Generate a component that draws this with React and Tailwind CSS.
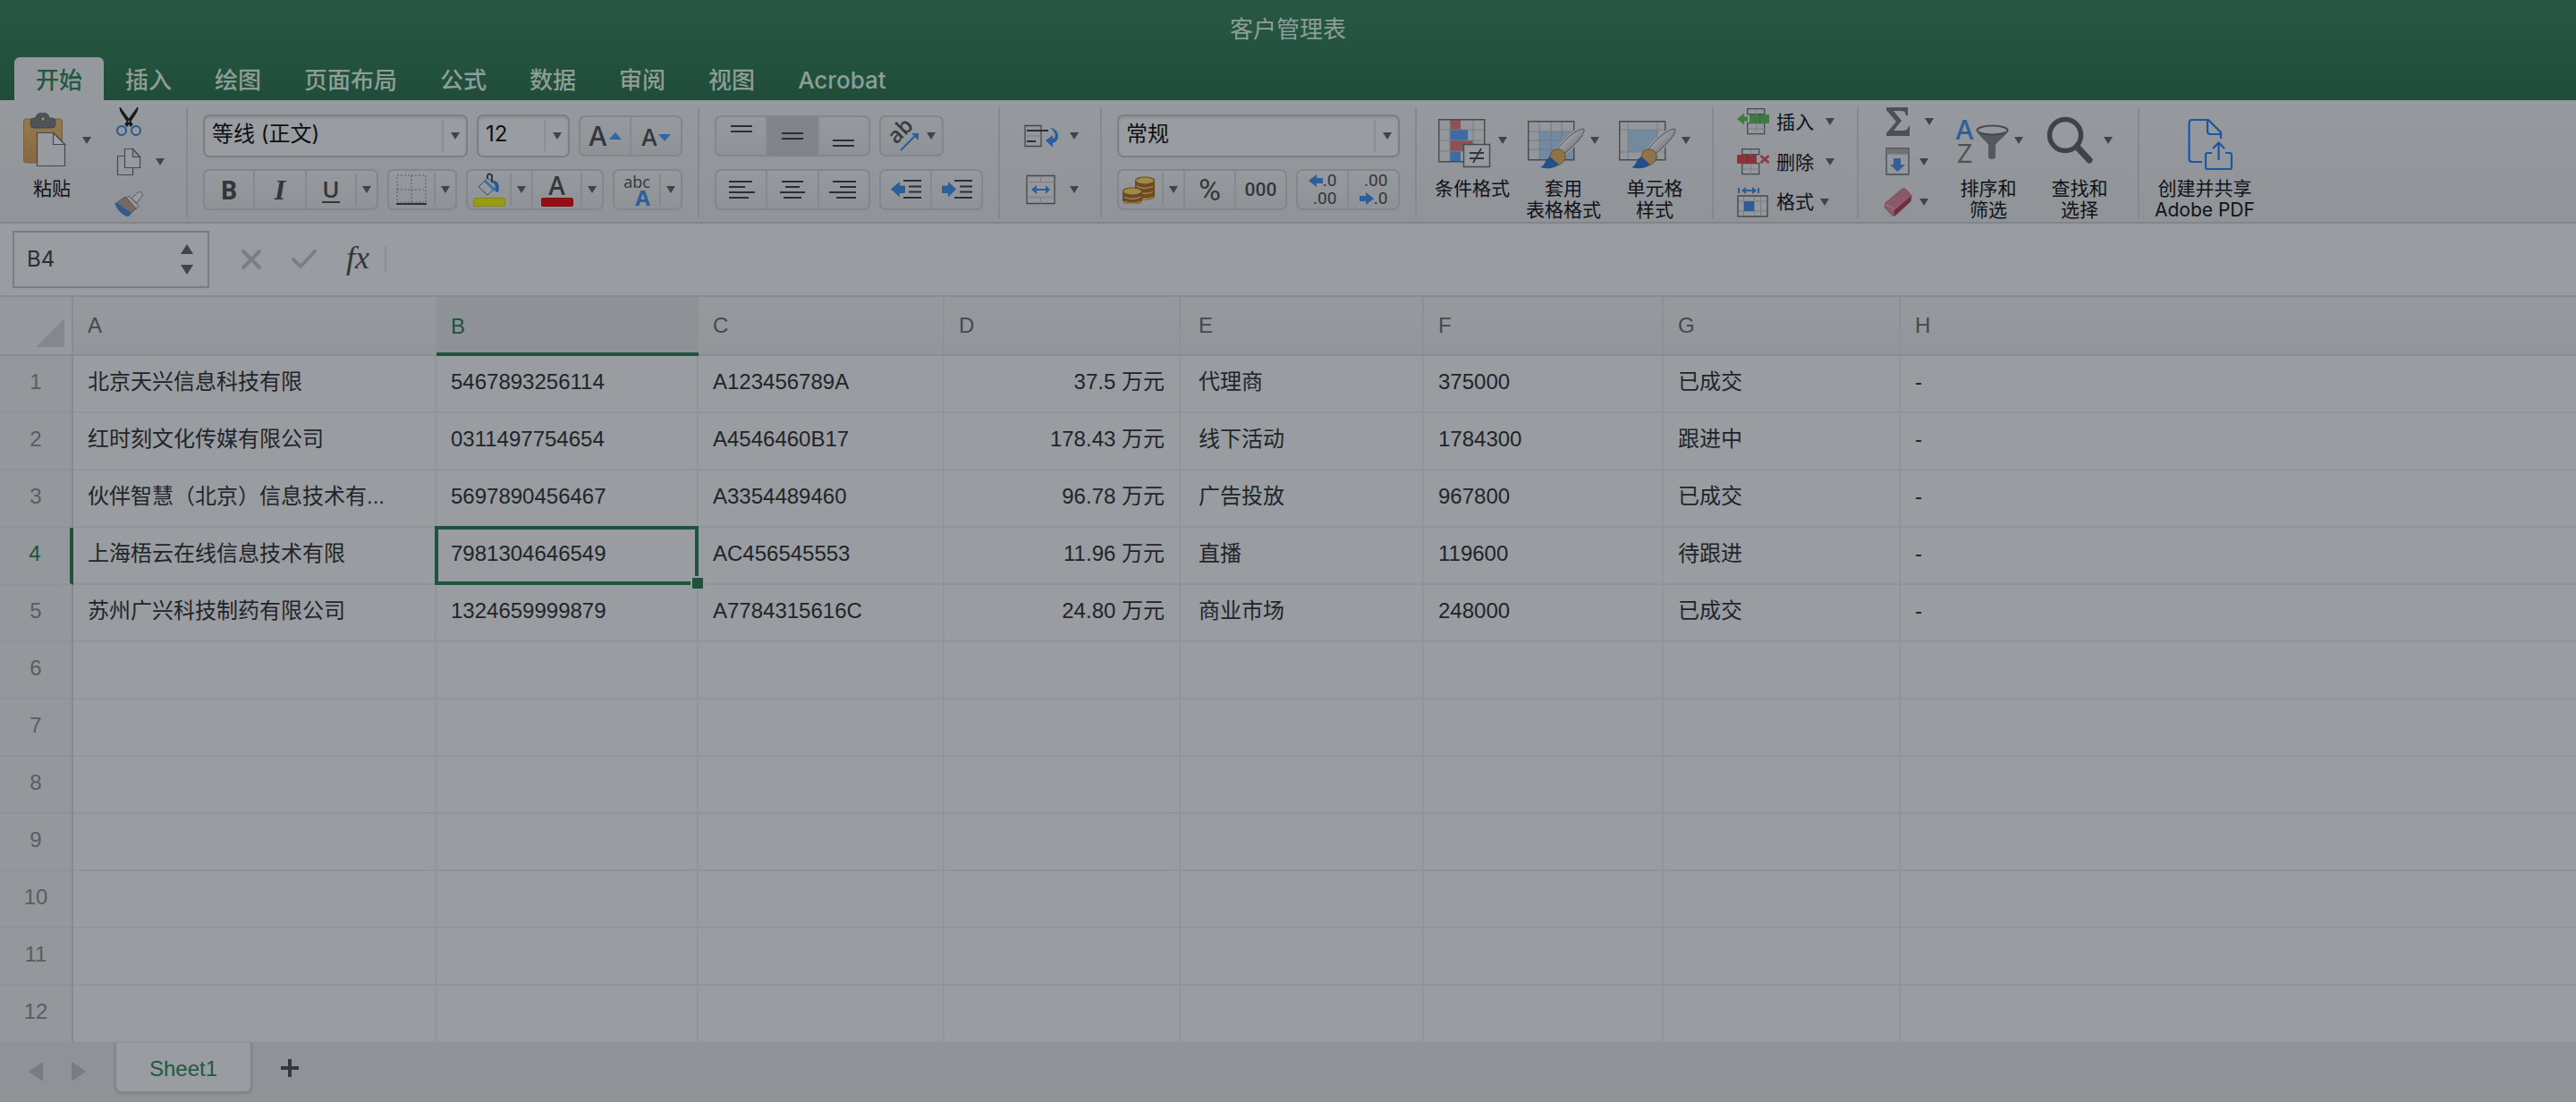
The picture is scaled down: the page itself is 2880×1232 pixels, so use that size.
import React from 'react';

const TABS = ['开始', '插入', '绘图', '页面布局', '公式', '数据', '审阅', '视图', 'Acrobat'];

const COLUMNS = ['A', 'B', 'C', 'D', 'E', 'F', 'G', 'H'];

const ROWS = [
  ['北京天兴信息科技有限', '5467893256114', 'A123456789A', '37.5 万元', '代理商', '375000', '已成交', '-'],
  ['红时刻文化传媒有限公司', '0311497754654', 'A4546460B17', '178.43 万元', '线下活动', '1784300', '跟进中', '-'],
  ['伙伴智慧（北京）信息技术有...', '5697890456467', 'A3354489460', '96.78 万元', '广告投放', '967800', '已成交', '-'],
  ['上海梧云在线信息技术有限', '7981304646549', 'AC456545553', '11.96 万元', '直播', '119600', '待跟进', '-'],
  ['苏州广兴科技制药有限公司', '1324659999879', 'A7784315616C', '24.80 万元', '商业市场', '248000', '已成交', '-'],
];

const ROW_COUNT = 12;
const ACTIVE = { row: 3, col: 1 };

function Caret({ className = '' }) {
  return (
    <svg viewBox="0 0 10 8" className={`w-[10px] h-2 shrink-0 ${className}`} aria-hidden="true">
      <path d="M0 0h10L5 8z" fill="#414549" />
    </svg>
  );
}

/* ---------- ribbon building blocks ---------- */

function Section({ className = '', children }) {
  return (
    <>
      <div className={`flex shrink-0 ${className}`}>{children}</div>
      <div className="w-[2px] h-[124px] mt-2 bg-[#85888c] shrink-0" />
    </>
  );
}

function Segments({ className = '', children }) {
  return (
    <div
      className={`flex h-[46px] rounded-[7px] border-2 border-[#83868a] bg-linear-to-b from-[#96999d] to-[#8f9296] divide-x-2 divide-[#86898d] ${className}`}
    >
      {children}
    </div>
  );
}

function Segment({ label, caret, active, className = '', children }) {
  return (
    <div className={`flex flex-1 items-stretch ${active ? 'bg-[#808387]' : ''} ${className}`}>
      <button aria-label={label} className="flex flex-1 items-center justify-center leading-none">
        {children}
      </button>
      {caret && (
        <button aria-label={`${label}选项`} className="flex w-6 items-center justify-center">
          <span className="w-[2px] h-9 bg-[#85888c]" />
          <Caret className="mx-auto" />
        </button>
      )}
    </div>
  );
}

function Combo({ label, value, className = '' }) {
  return (
    <div className={`relative h-12 ${className}`}>
      <select
        aria-label={label}
        defaultValue={value}
        className="appearance-none w-full h-full pl-2 pr-8 pb-1 rounded-[7px] border-2 border-[#7b7e82] bg-[#999ca0] text-2xl text-[#0c1015] shadow-[inset_0_2px_2px_#8b8e92]"
      >
        <option>{value}</option>
      </select>
      <div className="absolute right-[9px] top-[6px] h-9 flex items-center pointer-events-none">
        <span className="w-[2px] h-9 bg-[#8c8f93] mr-2" />
        <Caret />
      </div>
    </div>
  );
}

function BigButton({ icon, lines, caret = true, className = '', labelClass = '' }) {
  return (
    <button className={`flex flex-col items-center pt-3 ${className}`}>
      <span className="flex items-center justify-center gap-[6px] h-[66px]">
        {icon}
        {caret && <Caret />}
      </span>
      <span className={`flex flex-col mt-[9px] text-[21px] leading-6 text-[#0f1318] whitespace-nowrap ${labelClass}`}>
        {lines.map((l) => (
          <span key={l}>{l}</span>
        ))}
      </span>
    </button>
  );
}

/* ---------- icons ---------- */

function PasteIcon() {
  return (
    <svg viewBox="0 0 48 62" className="w-12 h-[62px] mr-3">
      <defs>
        <linearGradient id="board" x1="0" y1="0" x2="0" y2="1">
          <stop offset="0" stopColor="#957a4e" />
          <stop offset="1" stopColor="#866842" />
        </linearGradient>
      </defs>
      <rect x="0.5" y="7" width="43" height="49" rx="3" fill="url(#board)" stroke="#77603d" />
      <path d="M8 10q0-4 4-4h2c0-8 15-8 15 0h3q4 0 4 4v3q0 4-4 4H12q-4 0-4-4z" fill="#505357" stroke="#44474b" />
      <circle cx="22" cy="7" r="2.4" fill="#a18b63" stroke="#3c3f42" strokeWidth="1" />
      <path d="M15.5 22.500h18l13 13v24h-31z" fill="#979a9e" stroke="#45484c" strokeWidth="1.2" />
      <path d="M33.500 22.500v13h13z" fill="#9da0a4" stroke="#45484c" strokeWidth="1.2" />
    </svg>
  );
}

function ScissorsIcon() {
  return (
    <svg viewBox="0 0 28 32" className="w-7 h-8 ml-[2px]">
      <path d="M4 0c0 3 1 5 3 8l9 13 2-2zM24 0c0 3-1 5-3 8l-9 13-2-2z" fill="#191c20" stroke="#191c20" strokeWidth="1.200" />
      <circle cx="6" cy="26" r="5" fill="none" stroke="#29588f" strokeWidth="2" />
      <circle cx="22" cy="26" r="5" fill="none" stroke="#29588f" strokeWidth="2" />
    </svg>
  );
}

function CopyIcon() {
  return (
    <svg viewBox="0 0 28 32" className="w-7 h-8 ml-[2px]" stroke="#46494d" strokeWidth="1.2">
      <path d="M1.500 9.500h17v21h-17z" fill="#94979b" />
      <path d="M9.500 1.500h9l8 9v12h-17z" fill="#979a9e" />
      <path d="M18.500 1.500v9h8z" fill="#8d9094" />
    </svg>
  );
}

function FormatPainterIcon() {
  return (
    <svg viewBox="0 0 32 28" className="w-8 h-7 mt-1">
      <path d="M19 8l7-7q2-1 4 0t1 4l-6 8z" fill="#989b9f" stroke="#585b5f" />
      <path d="M13 7l3-2 11 11-3 4z" fill="#94979b" stroke="#585b5f" />
      <path d="M12 6l12 13-6 6C12 21 6 17 2 13z" fill="#746a62" stroke="#5a544f" />
      <path d="M1 13c7 1 9 6 11 7 3 1 5 2 7 4l-3 4c-6 0-13-7-16-15z" fill="#2e5a90" />
    </svg>
  );
}

function BordersIcon() {
  return (
    <svg viewBox="0 0 34 34" className="w-[34px] h-[34px]" fill="none">
      <path d="M1 1h32v30H1zM1 17h32M17 1v30" stroke="#6b6e72" strokeWidth="1.500" strokeDasharray="2 2" />
      <path d="M0 33h34" stroke="#2d3035" strokeWidth="2" />
    </svg>
  );
}

function BucketIcon() {
  return (
    <svg viewBox="0 0 26 26" className="w-[26px] h-[26px]">
      <path d="M11 6l11 9-11 10-10-9z" fill="#94979b" stroke="#46494d" />
      <path d="M9 8l12 11-3 2L7 10z" fill="#3d72ad" />
      <path d="M17 9c6 0 8 5 6 13l-3-1c0-5 0-8-3-10z" fill="#27598f" />
      <path d="M11 7V3q2-3 5 0v8" fill="none" stroke="#33363a" strokeWidth="2" />
    </svg>
  );
}

/* Stacks of short strokes; each entry is [x1, x2, y] */
const LINES = {
  top: [[5, 29, 15], [5, 29, 21]],
  middle: [[5, 29, 23], [5, 29, 29]],
  bottom: [[5, 29, 31], [5, 29, 37]],
  left: [[3, 29, 17], [3, 21, 23], [3, 32, 29], [3, 25, 35]],
  center: [[5, 29, 17], [9, 25, 23], [3, 31, 29], [7, 27, 35]],
  right: [[5, 31, 17], [13, 31, 23], [1, 31, 29], [9, 31, 35]],
};

function LinesIcon({ kind }) {
  return (
    <svg viewBox="0 0 34 52" className="w-[34px] h-[52px] -my-2 shrink-0">
      {LINES[kind].map(([a, b, y]) => (
        <path key={y} d={`M${a} ${y}H${b}`} stroke="#2b2e33" strokeWidth="2" />
      ))}
    </svg>
  );
}

function IndentIcon({ right }) {
  return (
    <svg viewBox="0 0 36 24" className="w-9 h-6">
      <path d="M15 2h20M21 8.500h14M21 14.500h14M15 21h20" stroke="#2b2e33" strokeWidth="2" />
      <path
        d={right ? 'M1 8.500q0-1 1-1h6V3l9 8.500-9 9V16H2q-1 0-1-1z' : 'M17 8.500q0-1-1-1h-5V3l-10 8.500 10 9V16h5q1 0 1-1z'}
        fill="#2c5f99"
      />
    </svg>
  );
}

function OrientationIcon() {
  return (
    <svg viewBox="0 0 36 36" className="w-9 h-9 overflow-visible">
      <text x="0" y="0" transform="translate(10 28) rotate(-45)" className="font-['Open_Sans',sans-serif] text-[24px] font-semibold" fill="#36393d">
        ab
      </text>
      <path d="M15 34l16-16" stroke="#2c5f99" strokeWidth="2" />
      <path d="M27 15h8v8z" fill="#2c5f99" />
    </svg>
  );
}

function WrapIcon() {
  return (
    <svg viewBox="0 0 40 26" className="w-10 h-[26px]">
      <path d="M1 1.500h18v23H1z" fill="#94979b" stroke="#44474b" strokeWidth="1.300" />
      <path d="M1 13h18" stroke="#7b7e82" />
      <path d="M3 7h24M3 19h10" stroke="#2b2e33" strokeWidth="2" />
      <path d="M29 4c12 1 11 16 3 17v5l-8-8 8-6v4c4-1 4-7-3-12z" fill="#2c5f99" />
    </svg>
  );
}

function MergeIcon() {
  return (
    <svg viewBox="0 0 40 34" className="w-10 h-[34px]">
      <path d="M3 1.500h31v31H3z" fill="#94979b" stroke="#44474b" strokeWidth="1.300" />
      <path d="M3 8.500h31M3 25.500h31M18.500 1.500v7M18.500 25.500v7" stroke="#7b7e82" />
      <path d="M12 17h14" stroke="#2c5f99" strokeWidth="2" />
      <path d="M14 12v10l-6-5zM24 12v10l5-5z" fill="#2c5f99" />
    </svg>
  );
}

function Coin({ x, y }) {
  return (
    <g>
      <path d={`M${x} ${y}v5c0 6 22 6 22 0v-5z`} fill="#6a4a28" />
      <path d={`M${x + 2} ${y + 6}c4 3 14 3 18 0`} stroke="#a4883f" strokeWidth="1.500" fill="none" />
      <ellipse cx={x + 11} cy={y} rx="10.500" ry="4" fill="#a08a44" stroke="#6a4a28" strokeWidth="1.200" />
    </g>
  );
}

function CoinsIcon() {
  return (
    <svg viewBox="0 0 38 32" className="w-[38px] h-8 mr-1">
      <Coin x={15} y={18} />
      <Coin x={15} y={12} />
      <Coin x={15} y={6} />
      <Coin x={1} y={23} />
      <Coin x={1} y={18} />
    </svg>
  );
}

function SmallArrow({ right }) {
  return (
    <svg viewBox="0 0 16 14" className="w-4 h-[14px]">
      <path d={right ? 'M0 4h7V0l9 7-9 7v-4H0z' : 'M16 4H9V0L0 7l9 7v-4h7z'} fill="#2c5f99" />
    </svg>
  );
}

function ConditionalIcon() {
  return (
    <svg viewBox="0 -4 58 56" className="w-[58px] h-14 mr-[3px] overflow-visible">
      <path d="M.7.700h51v47H.700z" fill="#94979b" />
      <path d="M13 1h12v11H13z" fill="#8f5058" />
      <path d="M13 12h20v12H13z" fill="#3f6ba3" />
      <path d="M13 24h26v12H13z" fill="#8f5058" />
      <path d="M13 36h12v12H13z" fill="#3f6ba3" />
      <path d="M13 1v47M39 1v47M1 12h51M1 24h51M1 36h51" stroke="#7b7e82" />
      <path d="M.7.700h51v47H.700z" fill="none" stroke="#46494d" strokeWidth="1.400" />
      <path d="M28.500 28.500h29v25h-29z" fill="#979a9e" stroke="#46494d" strokeWidth="1.400" />
      <path d="M35 38h16M35 44h16M48 33l-9 16" stroke="#33363a" strokeWidth="1.800" />
    </svg>
  );
}

function BrushGridIcon({ single }) {
  return (
    <svg viewBox="0 -4 64 56" className="w-16 h-14 overflow-visible">
      <defs>
        <linearGradient id="handle" x1="0" y1="0" x2="1" y2="1">
          <stop offset="0.300" stopColor="#a4a7ab" />
          <stop offset="0.800" stopColor="#6c6f73" />
        </linearGradient>
      </defs>
      <path d="M.7 2.700h51v43H.700z" fill="#94979b" />
      {single ? (
        <>
          <path d="M10 12h33v25H10z" fill="#738a9e" />
          <path d="M10 3v43M43 3v43M1 12h51M1 37h51" stroke="#7b7e82" />
        </>
      ) : (
        <>
          <path d="M13 14h39v32H13z" fill="#7489a0" />
          <path d="M13 3v43M26 3v43M38 3v43M1 14h51M1 24h51M1 34h51" stroke="#6f7b88" />
        </>
      )}
      <path d="M.7 2.700h51v43H.700z" fill="none" stroke="#46494d" strokeWidth="1.400" />
      <path d="M33 34C42 22 54 12 62 11c2 0 1 4-1 7-4 7-13 15-21 22z" fill="#94979b" stroke="#94979b" strokeWidth="4" />
      <path d="M33 34C42 22 54 12 62 11c2 0 1 4-1 7-4 7-13 15-21 22z" fill="url(#handle)" stroke="#4c4f53" />
      <path d="M25 44c0-7 4-11 10-10 5 1 7 4 7 8 0 5-4 8-8 10z" fill="#8f7449" stroke="#665030" />
      <path d="M25 42l10 9c-6 5-14 5-21 3 6-2 5-9 11-12z" fill="#23508a" />
    </svg>
  );
}

function CellsIcon({ kind }) {
  if (kind === 'format') {
    return (
      <svg viewBox="0 0 36 34" className="w-9 h-[34px]">
        <path d="M2 1v6M24 1v6M8 4h11" stroke="#2d5c94" strokeWidth="2" />
        <path d="M10 0v8L5 4zM17 0v8l5-4z" fill="#2d5c94" />
        <path d="M1 10h33v23H1z" fill="#94979b" />
        <path d="M7.500 10v23M19.500 10v23M26.500 10v23M1 16h33M1 27h33" stroke="#7b7e82" />
        <path d="M8 16h11v11H8z" fill="#2f5a92" />
        <path d="M1 10h33v23H1z" fill="none" stroke="#46494d" strokeWidth="1.400" />
      </svg>
    );
  }
  const insert = kind === 'insert';
  return (
    <svg viewBox="0 0 36 30" className="w-9 h-[30px]">
      <g transform={insert ? 'translate(11 0)' : 'translate(5 0)'}>
        <path d="M.7.700h19v6H.700zM.7 16.700h19v12H.700z" fill="#94979b" stroke="#46494d" strokeWidth="1.300" />
        <path d="M10.500 1v6M10.500 17v12M1 23h19" stroke="#7b7e82" />
      </g>
      {insert ? (
        <>
          <path d="M0 12l8-6.500v4h4v5H8v4z" fill="#3f7a41" />
          <rect x="14" y="7" width="22" height="10" rx="1" fill="#3f7a41" />
          <path d="M25.500 7v10" stroke="#35693a" />
        </>
      ) : (
        <>
          <rect x="0" y="7" width="22" height="10" rx="1" fill="#8b3339" />
          <path d="M11.500 7v10" stroke="#742a30" />
          <path d="M26.500 8l9 8M35.500 8l-9 8" stroke="#8f3a40" strokeWidth="3" />
        </>
      )}
    </svg>
  );
}

function SigmaIcon() {
  return (
    <svg viewBox="0 0 28 32" className="w-7 h-8 ml-[2px]">
      <path d="M1 0h24v9h-2c-1-4-2-5-6-5H9l9 11L9 26h9c5 0 7-1 8-5h1v11H1v-3l11-13L1 3z" fill="#4c4f53" />
    </svg>
  );
}

function FillDownIcon() {
  return (
    <svg viewBox="0 0 28 32" className="w-7 h-8 ml-[2px]">
      <path d="M1 1h25v29H1z" fill="#94979b" stroke="#46494d" strokeWidth="1.300" />
      <path d="M1.500 1.500h24v6h-24z" fill="#6f7276" />
      <path d="M9 12h8v7h5l-8.500 8L5 19h4z" fill="#315f96" />
    </svg>
  );
}

function EraserIcon() {
  return (
    <svg viewBox="0 0 32 32" className="w-8 h-8">
      <path d="M21 1q3-1 5 2l5 6-1 6-17 16q-2 1-4-1l-8-8 1-5z" fill="#8a5a68" stroke="#7a4354" />
      <path d="M12 25L31 9l-1 6-18 16q-1-3 0-6z" fill="#6e2c43" />
      <path d="M2 19q6 1 10 6" stroke="#a4808a" fill="none" />
    </svg>
  );
}

function SortFilterIcon() {
  return (
    <span className="flex items-center w-[61px]">
      <span className="flex flex-col items-center w-6 pt-[2px] text-[30px] leading-[26px] font-['Open_Sans',sans-serif]">
        <span className="text-[#2f609b] font-semibold">A</span>
        <span className="text-[#4d5054]">Z</span>
      </span>
      <svg viewBox="0 0 37 40" className="w-[37px] h-10 mt-1">
        <path d="M1 7c2 6 9 10 13 16v13q0 3 4 3t4-3V23C26 17 34 13 36 7z" fill="#55585c" />
        <ellipse cx="18.500" cy="6.500" rx="17" ry="5" fill="#94979b" stroke="#45484c" strokeWidth="2" />
      </svg>
    </span>
  );
}

function SearchIcon() {
  return (
    <svg viewBox="0 0 54 54" className="w-[54px] h-[54px] mr-1">
      <path d="M34 34l14 15" stroke="#3f4246" strokeWidth="7" strokeLinecap="round" />
      <circle cx="21" cy="21" r="17.500" fill="#979a9e" stroke="#3f4246" strokeWidth="5.500" />
    </svg>
  );
}

function ShareIcon() {
  return (
    <svg viewBox="0 0 50 66" className="w-[50px] h-[66px] ml-3" fill="none" stroke="#1c55a0" strokeWidth="2.200">
      <path d="M16 57H5q-3.500 0-3.500-3.500v-40Q1.500 10 5 10h18l14 14v7" />
      <path d="M22 11v12q0 3 3 3h12" />
      <path d="M27 47h-5q-2 0-2 2v14q0 2 2 2h25q2 0 2-2V49q0-2-2-2h-5" />
      <path d="M34.500 55V36M28 42l6.500-6.500L41 42" />
    </svg>
  );
}

/* ---------- page parts ---------- */

function TitleBar() {
  return (
    <header className="h-28 flex flex-col bg-linear-to-b from-[#285844] to-[#1f4d3a] text-[26px] text-[#8d9e98]">
      <h1 className="h-16 pt-[2px] flex items-center justify-center leading-none">客户管理表</h1>
      <nav className="flex h-12 pl-4">
        {TABS.map((tab, i) => (
          <button
            key={tab}
            className={`px-6 h-full leading-none pt-[3px] font-medium ${i === 0 ? 'rounded-t-md bg-[#95989c] text-[#1f5a40]' : ''}`}
          >
            {tab}
          </button>
        ))}
      </nav>
    </header>
  );
}

function SmallRow({ icon, label, text, caretClass = '' }) {
  return (
    <button aria-label={label} className="flex items-center h-[46px] text-[21px] leading-none text-[#0f1318]">
      {icon}
      {text && <span className="ml-2">{text}</span>}
      <Caret className={caretClass} />
    </button>
  );
}

function Ribbon() {
  return (
    <div className="flex h-[138px] bg-linear-to-b from-[#96999d] to-[#909397] border-b-2 border-[#828589] text-[#33363a] overflow-hidden">
      <Section className="w-52 pl-[26px]">
        <BigButton icon={<PasteIcon />} lines={['粘贴']} labelClass="pr-3" />
        <div className="flex flex-col ml-[26px] pt-[2px]">
          <SmallRow label="剪切" icon={<ScissorsIcon />} caretClass="hidden" />
          <SmallRow label="复制" icon={<CopyIcon />} caretClass="ml-4" />
          <SmallRow label="格式刷" icon={<FormatPainterIcon />} caretClass="hidden" />
        </div>
      </Section>

      <Section className="flex-col gap-[13px] pt-4 px-[17px]">
        <div className="flex items-center gap-[10px]">
          <Combo label="字体" value="等线 (正文)" className="w-[296px]" />
          <Combo label="字号" value="12" className="w-26" />
          <Segments className="w-[116px]">
            <Segment label="增大字号">
              <span className="text-[30px] font-medium mr-[2px]">A</span>
              <svg viewBox="0 0 14 8" className="w-[14px] h-2"><path d="M0 8h14L7 0z" fill="#2f66a6" /></svg>
            </Segment>
            <Segment label="减小字号">
              <span className="text-[26px] font-medium pt-1 mr-px">A</span>
              <svg viewBox="0 0 14 8" className="w-[14px] h-2 mt-1"><path d="M0 0h14L7 8z" fill="#2f66a6" /></svg>
            </Segment>
          </Segments>
        </div>
        <div className="flex gap-[10px] font-['Open_Sans',sans-serif]">
          <Segments className="w-[196px]">
            <Segment label="加粗" className="max-w-[56px] text-[28px] font-bold">B</Segment>
            <Segment label="倾斜" className="max-w-[58px] text-[32px] font-semibold italic">
              <span className="font-['Liberation_Serif',serif]">I</span>
            </Segment>
            <Segment label="下划线" caret>
              <span className="text-[26px] font-semibold border-b-2 border-[#33363a] leading-7">U</span>
            </Segment>
          </Segments>
          <Segments className="w-[78px]">
            <Segment label="边框" caret><BordersIcon /></Segment>
          </Segments>
          <Segments className="w-[154px]">
            <Segment label="填充颜色" caret className="max-w-[73px]">
              <span className="flex flex-col items-center">
                <BucketIcon />
                <span className="w-9 h-[10px] mt-[2px] rounded-xs bg-[#999b14] border border-[#858712]" />
              </span>
            </Segment>
            <Segment label="字体颜色" caret>
              <span className="flex flex-col items-center text-[28px] leading-7 font-semibold">
                A
                <span className="w-9 h-[10px] rounded-xs bg-[#960f14] border border-[#800d12]" />
              </span>
            </Segment>
          </Segments>
          <Segments className="w-[78px]">
            <Segment label="拼音" caret>
              <span className="flex flex-col pt-[2px] text-[18px] leading-4 font-medium">
                abc
                <span className="self-end text-2xl leading-5 font-bold text-[#2c5f9c]">A</span>
              </span>
            </Segment>
          </Segments>
        </div>
      </Section>

      <Section className="flex-col gap-[13px] pt-[17px] px-[17px]">
        <div className="flex gap-[10px]">
          <Segments className="w-[174px]">
            <Segment label="顶端对齐"><LinesIcon kind="top" /></Segment>
            <Segment label="垂直居中" active><LinesIcon kind="middle" /></Segment>
            <Segment label="底端对齐"><LinesIcon kind="bottom" /></Segment>
          </Segments>
          <Segments className="w-18">
            <Segment label="方向">
              <OrientationIcon />
              <Caret className="ml-2" />
            </Segment>
          </Segments>
        </div>
        <div className="flex gap-[10px] pt-px">
          <Segments className="w-[174px]">
            <Segment label="左对齐"><LinesIcon kind="left" /></Segment>
            <Segment label="居中"><LinesIcon kind="center" /></Segment>
            <Segment label="右对齐"><LinesIcon kind="right" /></Segment>
          </Segments>
          <Segments className="w-[116px]">
            <Segment label="减少缩进"><IndentIcon /></Segment>
            <Segment label="增加缩进"><IndentIcon right /></Segment>
          </Segments>
        </div>
      </Section>

      <Section className="flex-col gap-[13px] pt-4 pl-[27px] pr-6">
        <button aria-label="自动换行" className="flex items-center h-12">
          <WrapIcon />
          <Caret className="ml-[11px]" />
        </button>
        <button aria-label="合并后居中" className="flex items-center h-[46px]">
          <MergeIcon />
          <Caret className="ml-[11px]" />
        </button>
      </Section>

      <Section className="flex-col gap-[13px] pt-4 px-[17px]">
        <Combo label="数字格式" value="常规" className="w-[316px]" />
        <div className="flex gap-[10px]">
          <Segments className="w-[190px]">
            <Segment label="货币" caret className="min-w-[74px]"><CoinsIcon /></Segment>
            <Segment label="百分比"><span className="font-['Roboto',sans-serif] text-[34px]">%</span></Segment>
            <Segment label="千位分隔"><span className="font-['Roboto',sans-serif] text-[21px] font-medium">000</span></Segment>
          </Segments>
          <Segments className="w-[116px] font-['Roboto',sans-serif] text-[19px]">
            <Segment label="增加小数位">
              <span className="flex flex-col items-end leading-5">
                <span className="flex items-center"><SmallArrow />.0</span>
                <span>.00</span>
              </span>
            </Segment>
            <Segment label="减少小数位">
              <span className="flex flex-col items-end leading-5">
                <span>.00</span>
                <span className="flex items-center"><SmallArrow right />.0</span>
              </span>
            </Segment>
          </Segments>
        </div>
      </Section>

      <Section className="pl-[11px] pr-[13px]">
        <BigButton className="w-[102px]" icon={<ConditionalIcon />} lines={['条件格式']} />
        <BigButton className="w-[102px]" icon={<BrushGridIcon />} lines={['套用', '表格格式']} />
        <BigButton className="w-[102px]" icon={<BrushGridIcon single />} lines={['单元格', '样式']} />
      </Section>

      <Section className="w-40 flex-col pl-[26px] pt-[2px]">
        <SmallRow icon={<CellsIcon kind="insert" />} text="插入" caretClass="ml-[13px]" />
        <SmallRow icon={<CellsIcon kind="delete" />} text="删除" caretClass="ml-[13px]" />
        <SmallRow icon={<CellsIcon kind="format" />} text="格式" caretClass="ml-[7px]" />
      </Section>

      <Section className="pl-7 pr-[14px]">
        <div className="flex flex-col w-[66px] pt-[2px]">
          <SmallRow label="自动求和" icon={<SigmaIcon />} caretClass="ml-4" />
          <SmallRow label="填充" icon={<FillDownIcon />} caretClass="ml-[10px]" />
          <SmallRow label="清除" icon={<EraserIcon />} caretClass="ml-2" />
        </div>
        <BigButton className="w-[102px]" icon={<SortFilterIcon />} lines={['排序和', '筛选']} />
        <BigButton className="w-[102px]" icon={<SearchIcon />} lines={['查找和', '选择']} />
      </Section>

      <BigButton className="ml-[17px]" icon={<ShareIcon />} lines={['创建并共享', 'Adobe PDF']} caret={false} />
    </div>
  );
}

function FormulaBar() {
  return (
    <div className="flex items-center h-20 pl-[14px] bg-[#999ca0]">
      <div className="flex items-center w-[220px] h-16 border-2 border-[#797c80] pr-4 pl-[14px]">
        <input
          aria-label="名称框"
          defaultValue="B4"
          className="flex-1 min-w-0 bg-transparent text-2xl text-[#2b2e33] outline-none"
        />
        <div className="flex flex-col gap-3">
          <button aria-label="上一个">
            <svg viewBox="0 0 14 11" className="w-[14px] h-[11px] block"><path d="M0 11h14L7 0z" fill="#414549" /></svg>
          </button>
          <button aria-label="下一个">
            <svg viewBox="0 0 14 11" className="w-[14px] h-[11px] block"><path d="M0 0h14L7 11z" fill="#414549" /></svg>
          </button>
        </div>
      </div>
      <button aria-label="取消" className="ml-9">
        <svg viewBox="0 0 22 22" className="w-[22px] h-[22px] block"><path d="M2 2l18 18M20 2L2 20" stroke="#7b7e82" strokeWidth="4" strokeLinecap="round" /></svg>
      </button>
      <button aria-label="确认" className="ml-[34px]">
        <svg viewBox="0 0 28 22" className="w-7 h-[22px] block"><path d="M2 11l8 8L26 2" fill="none" stroke="#7b7e82" strokeWidth="4" strokeLinecap="round" /></svg>
      </button>
      <button
        aria-label="插入函数"
        className="w-8 ml-[30px] pb-1 font-['Liberation_Serif',serif] text-4xl font-medium italic leading-none text-[#33363a]"
      >
        fx
      </button>
      <span className="w-[2px] h-[30px] ml-[14px] bg-[#8b8e92]" />
      <input aria-label="编辑栏" className="flex-1 h-full px-4 bg-transparent text-2xl outline-none" />
    </div>
  );
}

function Cell({ value, row, col }) {
  const active = row === ACTIVE.row && col === ACTIVE.col;
  const align = col === 3 ? 'text-right' : '';
  const edge = col === 7 ? '' : 'border-r-2';
  const pad = col === 4 ? 'pl-5' : 'pl-4';
  return (
    <td className={`relative h-16 pr-4 pb-1 ${pad} border-b-2 ${edge} border-[#919498] whitespace-nowrap text-[#212529] ${align}`}>
      {value}
      {active && (
        <div className="absolute z-10 -inset-x-[2px] -top-[2px] -bottom-[2px] border-4 border-[#20533c] pointer-events-none">
          <div className="absolute -right-[11px] -bottom-[10px] w-4 h-4 bg-[#20533c] border-2 border-[#999ca0]" />
        </div>
      )}
    </td>
  );
}

function Grid() {
  return (
    <table className="w-full table-fixed border-separate border-spacing-0 border-t-2 border-[#888b8f] bg-[#999ca0] font-['Liberation_Sans','Noto_Sans_CJK_SC',sans-serif] text-2xl leading-7">
      <colgroup>
        <col className="w-[82px]" />
        <col className="w-[406px]" />
        <col className="w-[293px]" />
        <col className="w-[275px]" />
        <col className="w-[264px]" />
        <col className="w-[272px]" />
        <col className="w-[268px]" />
        <col className="w-[265px]" />
        <col />
      </colgroup>
      <thead>
        <tr>
          <th className="h-[66px] p-0 border-b-2 border-r-2 border-[#888b8f] bg-[#96999d]">
            <svg viewBox="0 0 32 32" className="w-8 h-8 ml-auto mr-2 mt-4"><path d="M32 0v32H0z" fill="#84878b" /></svg>
          </th>
          {COLUMNS.map((name, i) => (
            <th
              key={name}
              scope="col"
              className={`h-[66px] pr-4 text-left font-normal ${i === 4 ? 'pl-5' : 'pl-4'} ${
                i === ACTIVE.col
                  ? 'border-b-4 border-[#20533c] bg-[#8e9195] text-[#20533c] pt-[3px]'
                  : 'border-b-2 border-b-[#888b8f] bg-linear-to-b from-[#96999d] to-[#929599] text-[#46494d]'
              } ${i > 1 && i < 7 ? 'border-r-2 border-r-[#8d9094]' : ''}`}
            >
              {name}
            </th>
          ))}
        </tr>
      </thead>
      <tbody>
        {Array.from({ length: ROW_COUNT }, (_, r) => (
          <tr key={r}>
            <th
              scope="row"
              className={`h-16 p-0 pb-1 font-normal border-b-2 border-b-[#8f9296] bg-[#94979b] ${
                r === ACTIVE.row ? 'border-r-4 border-r-[#20533c] text-[#20533c]' : 'border-r-2 border-r-[#86898d] text-[#5a5d61]'
              }`}
            >
              {r + 1}
            </th>
            {COLUMNS.map((name, c) => (
              <Cell key={name} value={ROWS[r]?.[c]} row={r} col={c} />
            ))}
          </tr>
        ))}
      </tbody>
    </table>
  );
}

function SheetBar() {
  return (
    <footer className="flex items-start h-[66px] bg-[#8f9296] font-['Liberation_Sans',sans-serif]">
      <button aria-label="上一张" className="ml-8 mt-[21px]">
        <svg viewBox="0 0 16 22" className="w-4 h-[22px] block"><path d="M16 0v22L0 11z" fill="#797c80" /></svg>
      </button>
      <button aria-label="下一张" className="ml-8 mt-[21px]">
        <svg viewBox="0 0 16 22" className="w-4 h-[22px] block"><path d="M0 0v22l16-11z" fill="#797c80" /></svg>
      </button>
      <button className="ml-8 w-[154px] h-14 pt-1 rounded-b-lg border-2 border-t-0 border-[#828589] bg-[#999ca0] shadow-sm text-2xl text-[#205a41]">
        Sheet1
      </button>
      <button aria-label="新建工作表" className="ml-8 mt-[18px]">
        <svg viewBox="0 0 20 20" className="w-5 h-5 block"><path d="M10 0v20M0 10h20" stroke="#33363a" strokeWidth="4" /></svg>
      </button>
    </footer>
  );
}

export default function App() {
  return (
    <div className="min-h-screen flex flex-col bg-[#8f9296] font-['Inter','Noto_Sans_CJK_SC',sans-serif]">
      <TitleBar />
      <Ribbon />
      <FormulaBar />
      <Grid />
      <SheetBar />
    </div>
  );
}
